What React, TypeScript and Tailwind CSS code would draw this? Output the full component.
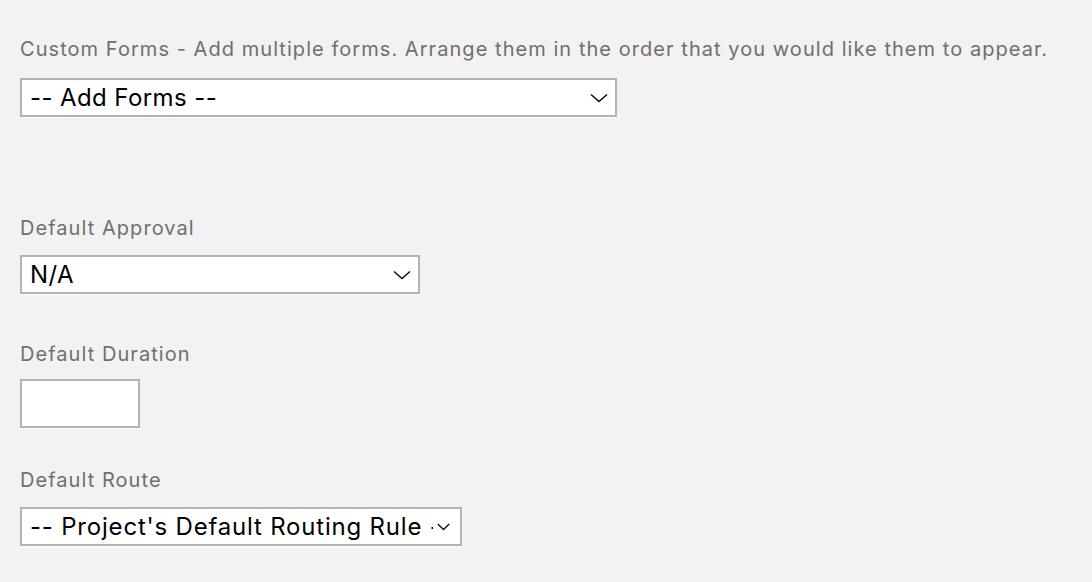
import React from "react";

const Chevron = ({ small }: { small?: boolean }) =>
  small ? (
    <svg width="13" height="8" viewBox="0 0 13 8" fill="none" className="shrink-0">
      <path d="M0.8 1 L6.5 6.6 L12.2 1" stroke="#111" strokeWidth="1.4" />
    </svg>
  ) : (
    <svg width="18" height="10" viewBox="0 0 18 10" fill="none" className="shrink-0">
      <path d="M1 1.5 L9 8.5 L17 1.5" stroke="#111" strokeWidth="1.6" />
    </svg>
  );

function Select({
  text,
  width,
  small,
}: {
  text: string;
  width: string;
  small?: boolean;
}) {
  return (
    <div
      className={`${width} h-[39px] bg-white border-2 border-[#b3b3b3] shadow-[0_1px_0_#ffffff] flex items-center pl-[8px] text-[24px] text-black overflow-hidden whitespace-nowrap ${
        small ? "pr-[10px] gap-[4px] tracking-[0.8px]" : "pr-[7px] gap-[6px] tracking-[0.4px]"
      }`}
    >
      <span className="flex-1 min-w-0 overflow-hidden leading-[30px]">{text}</span>
      <Chevron small={small} />
    </div>
  );
}

const labelCls = "text-[20px] leading-[24px] tracking-[1.05px] text-[#6f6f6f]";

export default function App() {
  return (
    <div
      className="min-h-[582px] w-[1092px] bg-[#f2f2f2] pl-[20px] pt-[37px] flex flex-col items-start"
      style={{ fontFamily: 'Inter, "Liberation Sans", sans-serif' }}
    >
      <div className={labelCls}>
        Custom Forms - Add multiple forms. Arrange them in the order that you would like them to appear.
      </div>
      <div className="mt-[17px]">
        <Select text="-- Add Forms --" width="w-[597px]" />
      </div>

      <div className={`mt-[99px] ${labelCls}`}>Default Approval</div>
      <div className="mt-[15px]">
        <Select text="N/A" width="w-[400px]" />
      </div>

      <div className={`mt-[48px] ${labelCls}`}>Default Duration</div>
      <div className="mt-[13px] w-[120px] h-[49px] bg-white border-2 border-[#b3b3b3] shadow-[0_1px_0_#ffffff]" />

      <div className={`mt-[40px] ${labelCls}`}>Default Route</div>
      <div className="mt-[15px]">
        <Select text="-- Project's Default Routing Rule --" width="w-[442px]" small />
      </div>
    </div>
  );
}
